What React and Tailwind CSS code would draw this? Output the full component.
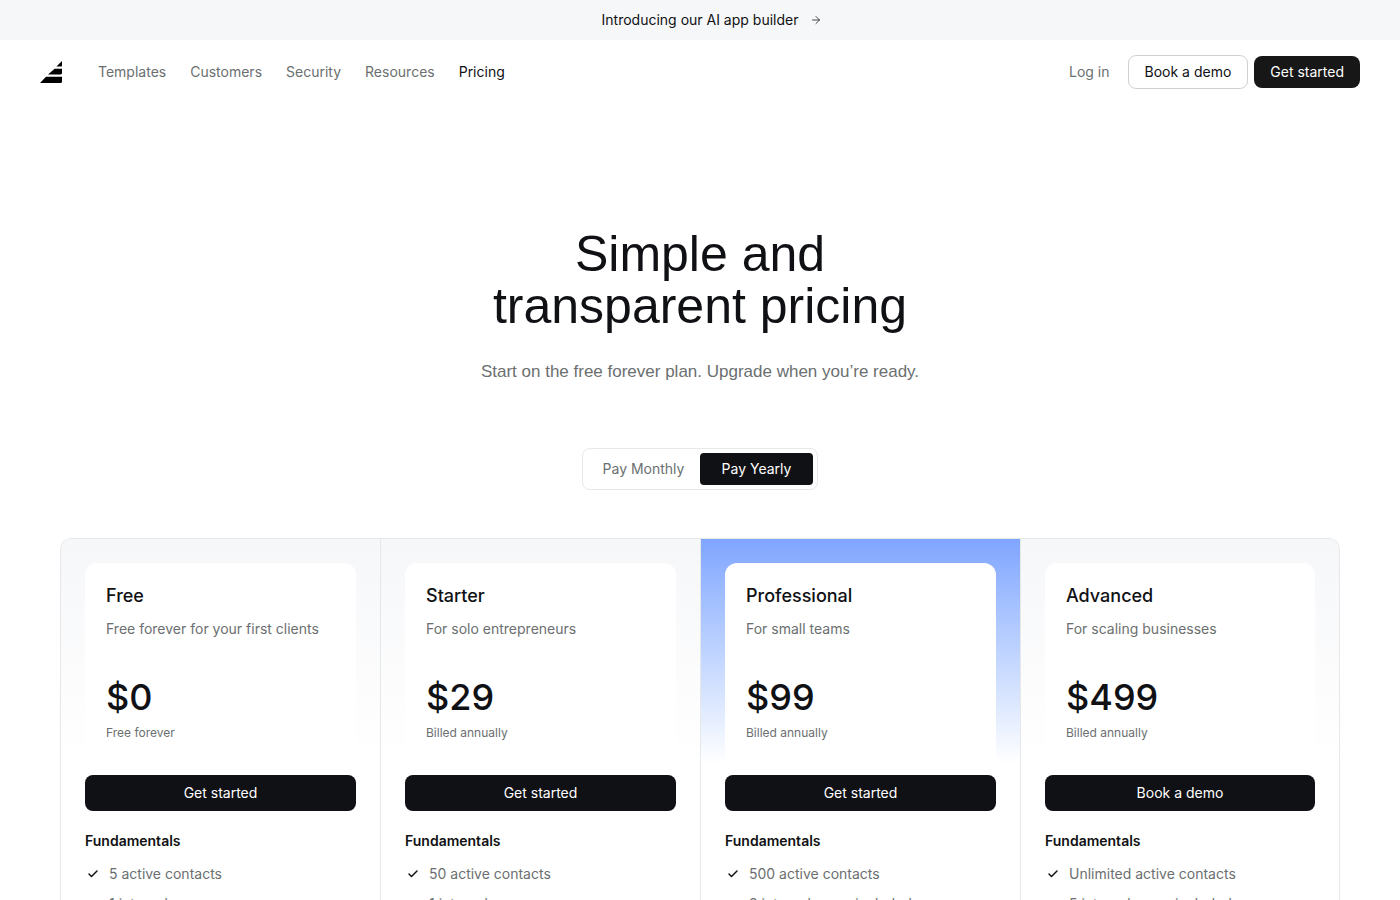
import { ArrowRight, Check } from "lucide-react";

const links = ["Templates", "Customers", "Security", "Resources"];

const plans = [
  { name: "Free", blurb: "Free forever for your first clients", price: "$0", note: "Free forever", cta: "Get started", features: ["5 active contacts", "1 internal user"] },
  { name: "Starter", blurb: "For solo entrepreneurs", price: "$29", note: "Billed annually", cta: "Get started", features: ["50 active contacts", "1 internal user"] },
  { name: "Professional", blurb: "For small teams", price: "$99", note: "Billed annually", cta: "Get started", features: ["500 active contacts", "3 internal users included"], featured: true },
  { name: "Advanced", blurb: "For scaling businesses", price: "$499", note: "Billed annually", cta: "Book a demo", features: ["Unlimited active contacts", "5 internal users included"] },
];

function Logo() {
  return (
    <svg viewBox="0 0 22 22" className="h-[22px] w-[22px]" fill="black" aria-hidden="true">
      <path d="M22 0v4.400c0 .6-.4 1-1 1h-4.600z" />
      <path d="M14.600 7.700H22v4.400c0 .9-.5 1.400-1.400 1.400H8.000z" />
      <path d="M6.000 15.800H22v4.700c0 .9-.5 1.500-1.400 1.500H0z" />
    </svg>
  );
}

function Plan({ plan }) {
  return (
    <article className="min-w-0 overflow-hidden border-t border-l border-[#e5e7e9] first:rounded-tl-xl last:rounded-tr-xl last:border-r">
      <div
        className={
          plan.featured
            ? "bg-linear-to-b from-[#80a5ff] to-white to-95% px-6 pt-6"
            : "bg-linear-to-b from-[#f6f7f9] to-white to-95% px-6 pt-6"
        }
      >
        <div className="h-[212px] rounded-t-xl bg-white px-[21px] pt-5">
          <h2 className="text-lg leading-[26px] font-medium">{plan.name}</h2>
          <p className="mt-2 text-sm leading-6 text-[#6b6f70]">{plan.blurb}</p>
          <p className="mt-9 text-[36px] leading-[40px] font-medium">{plan.price}</p>
          <p className="mt-1 text-xs leading-6 text-[#6b6f70]">{plan.note}</p>
        </div>
      </div>
      <div className="px-6 pb-10">
        <button type="button" className="block h-9 w-full rounded-lg bg-[#101114] text-sm text-white">
          {plan.cta}
        </button>
        <h3 className="mt-5 text-sm leading-5 font-semibold">Fundamentals</h3>
        <ul className="mt-2 text-sm text-[#6b6f70]">
          {plan.features.map((feature) => (
            <li key={feature} className="flex h-[30px] items-center gap-[10px] pl-[2px] leading-5 whitespace-nowrap">
              <Check className="size-3 shrink-0 text-[#101114]" strokeWidth={3} aria-hidden="true" />
              {feature}
            </li>
          ))}
        </ul>
      </div>
    </article>
  );
}

export default function App() {
  return (
    <div className="min-h-screen bg-white font-['Inter',sans-serif] text-[#101114]">
      <a href="#builder" className="flex h-10 items-center justify-center gap-3 bg-[#f6f7f9] text-sm">
        <span className="size-3" />
        Introducing our AI app builder
        <ArrowRight className="size-3" strokeWidth={1.5} aria-hidden="true" />
      </a>
      <header className="flex h-16 items-center justify-between px-10">
        <nav className="flex items-center gap-6 text-sm text-[#6b6f70]">
          <a href="#home" aria-label="Home" className="mr-3">
            <Logo />
          </a>
          {links.map((link) => (
            <a key={link} href="#nav">{link}</a>
          ))}
          <a href="#pricing" className="text-[#101114]">Pricing</a>
        </nav>
        <div className="flex items-center gap-[6px] text-sm">
          <a href="#login" className="mr-3 text-[#6b6f70]">Log in</a>
          <button type="button" className="h-[34px] rounded-lg border border-[#cfd1d3] px-4">Book a demo</button>
          <button type="button" className="h-8 rounded-lg bg-[#171717] px-4 text-white">Get started</button>
        </div>
      </header>
      <main className="px-[60px] pt-[124px]">
        <section className="flex flex-col items-center text-center">
          <h1 className="font-['Liberation_Sans',sans-serif] text-[50px] leading-[52px]">
            Simple and
            <br />
            transparent pricing
          </h1>
          <p className="mt-7 font-['Liberation_Sans',sans-serif] text-[17px] leading-6 text-[#6b6f70]">
            Start on the free forever plan. Upgrade when you’re ready.
          </p>
          <div className="mt-16 flex h-[42px] w-[236px] rounded-lg border border-[#e7e8ea] p-1 text-sm">
            <button type="button" aria-pressed="false" className="flex-1 text-[#6b6f70]">Pay Monthly</button>
            <button type="button" aria-pressed="true" className="flex-1 rounded bg-[#101114] text-white">Pay Yearly</button>
          </div>
        </section>
        <section className="mt-12 grid grid-cols-4">
          {plans.map((plan) => (
            <Plan key={plan.name} plan={plan} />
          ))}
        </section>
      </main>
    </div>
  );
}
